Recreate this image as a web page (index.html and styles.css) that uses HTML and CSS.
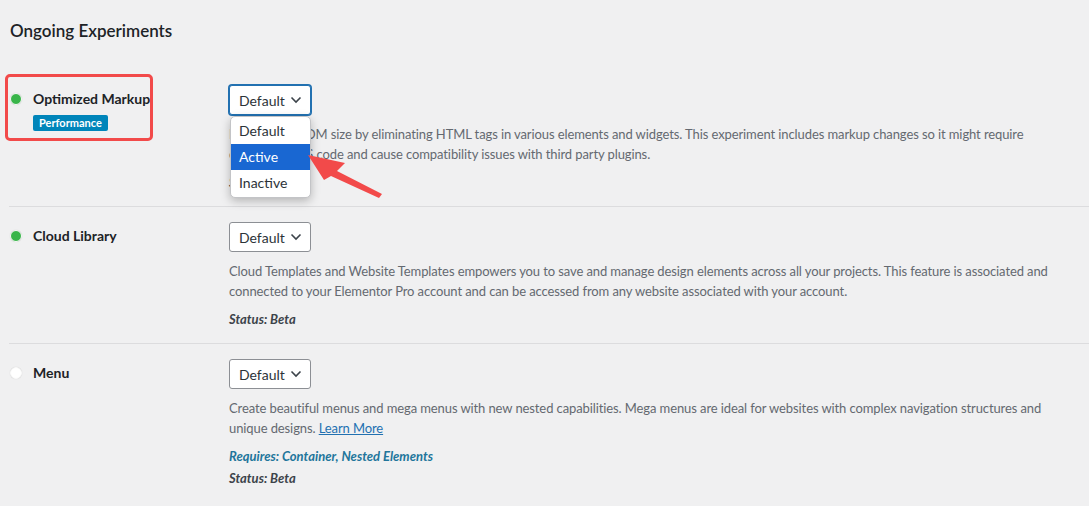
FILE: index.html
```html
<!DOCTYPE html>
<html lang="en">
  <head>
    <meta charset="UTF-8" />
    <title>Experiments</title>
    <link rel="stylesheet" href="styles.css">
  </head>
  <body>
    <div class="wrap">
      <h2 class="title">Ongoing Experiments</h2>

      <div class="row">
        <div class="labelCol">
          <div class="label"><span class="dot on"></span>Optimized Markup</div>
          <span class="tag">Performance</span>
        </div>
        <div class="field">
          <div class="selectWrap">
            <div class="select focus">
              Default
              <svg width="12" height="8" viewBox="0 0 12 8"><path d="M1.5 1.5 L6 6 L10.5 1.5" fill="none" stroke="#3c434a" stroke-width="1.6"/></svg>
            </div>
            <ul class="dropdown">
              <li>Default</li>
              <li class="current">Active</li>
              <li>Inactive</li>
            </ul>
          </div>
          <p class="description">Reduce the DOM size by eliminating HTML tags in various elements and widgets. This experiment includes markup changes so it might require custom CSS/JS code and cause compatibility issues with third party plugins.</p>
          <div class="meta">
            <p class="status">Status: Beta</p>
          </div>
        </div>
      </div>

      <div class="row">
        <div class="labelCol">
          <div class="label"><span class="dot on"></span>Cloud Library</div>
        </div>
        <div class="field">
          <div class="select">
            Default
            <svg width="12" height="8" viewBox="0 0 12 8"><path d="M1.5 1.5 L6 6 L10.5 1.5" fill="none" stroke="#3c434a" stroke-width="1.6"/></svg>
          </div>
          <p class="description">Cloud Templates and Website Templates empowers you to save and manage design elements across all your projects. This feature is associated and connected to your Elementor Pro account and can be accessed from any website associated with your account.</p>
          <div class="meta">
            <p class="status">Status: Beta</p>
          </div>
        </div>
      </div>

      <div class="row">
        <div class="labelCol">
          <div class="label"><span class="dot"></span>Menu</div>
        </div>
        <div class="field">
          <div class="select">
            Default
            <svg width="12" height="8" viewBox="0 0 12 8"><path d="M1.5 1.5 L6 6 L10.5 1.5" fill="none" stroke="#3c434a" stroke-width="1.6"/></svg>
          </div>
          <p class="description">Create beautiful menus and mega menus with new nested capabilities. Mega menus are ideal for websites with complex navigation structures and unique designs. <a href="#">Learn More</a></p>
          <div class="meta">
            <p class="requires">Requires: Container, Nested Elements</p>
            <p class="status">Status: Beta</p>
          </div>
        </div>
      </div>

      <!-- annotation overlay -->
      <div class="markBox"></div>
      <svg class="markArrow" width="1089" height="506" viewBox="0 0 1089 506">
        <polygon points="308,155 345,163 337,171 382,194 379,198 331,176 324,180" fill="#f24a4a"/>
      </svg>
    </div>
  </body>
</html>
```

FILE: styles.css
```css
* {
  margin: 0;
  padding: 0;
  box-sizing: border-box;
}
body {
  background-color: #f0f0f1;
  font-family: Lato, "Liberation Sans", sans-serif;
  color: #1d2327;
  font-size: 13px;
}
.wrap {
  position: relative;
  padding: 20px 0 0 9px;
  height: 506px;
  overflow: hidden;
}
.title {
  font-size: 17px;
  font-weight: 600;
  line-height: 22px;
  padding-left: 1px;
  margin-bottom: 28px;
}
.row {
  display: flex;
  border-top: 1px solid #dcdcde;
}
.row:first-of-type {
  border-top: 0;
}
.labelCol {
  width: 210px;
  flex-shrink: 0;
  padding: 20px 10px 0 0;
}
.label {
  display: flex;
  align-items: center;
  gap: 11px;
  font-size: 14px;
  font-weight: 700;
  line-height: 18px;
}
.dot {
  width: 12px;
  height: 12px;
  border-radius: 50%;
  background-color: #fff;
  border: 1px solid #fafafa;
  box-shadow: 0 0 1px rgba(0, 0, 0, 0.2);
  margin-left: 1px;
}
.dot.on {
  background-color: #39b54a;
}
.tag {
  display: inline-block;
  margin: 7px 0 0 24px;
  padding: 0 6px;
  height: 16px;
  line-height: 16px;
  border-radius: 2px;
  background-color: #0085ba;
  color: #fff;
  font-size: 11px;
  font-weight: 700;
}
.field {
  flex: 1;
  padding: 15px 30px 14px 10px;
}
.selectWrap {
  position: relative;
}
.select {
  width: 82px;
  height: 30px;
  display: flex;
  align-items: center;
  justify-content: space-between;
  padding: 0 8px 0 9px;
  background-color: #fff;
  border: 1px solid #8c8f94;
  border-radius: 3px;
  font-size: 14px;
  color: #2c3338;
}
.select.focus {
  border-color: #2271b1;
  box-shadow: 0 0 0 1px #2271b1;
}
.dropdown {
  position: absolute;
  top: 31px;
  left: 1px;
  width: 81px;
  padding: 1px 0;
  list-style: none;
  background-color: #fff;
  border: 1px solid #c3c4c7;
  border-radius: 5px;
  box-shadow: 0 3px 10px rgba(0, 0, 0, 0.25);
  overflow: hidden;
  z-index: 5;
}
.dropdown li {
  height: 26px;
  line-height: 26px;
  padding-left: 8px;
  font-size: 14px;
  color: #2c3338;
}
.dropdown li.current {
  background-color: #1967d2;
  color: #fff;
}
.description {
  margin-top: 9px;
  line-height: 20px;
  color: #646970;
  letter-spacing: -0.1px;
}
.description a {
  color: #2271b1;
}
.meta {
  display: flex;
  flex-direction: column;
  gap: 2px;
  margin-top: 8px;
}
.meta p {
  line-height: 20px;
  font-weight: 700;
  font-style: italic;
}
.status {
  color: #3c434a;
}
.requires {
  color: #21759b;
}
.markBox {
  position: absolute;
  top: 74px;
  left: 5px;
  width: 148px;
  height: 67px;
  border: 3px solid #f24a4a;
  border-radius: 5px;
}
.markArrow {
  position: absolute;
  top: 0;
  left: 0;
  z-index: 10;
}
```
